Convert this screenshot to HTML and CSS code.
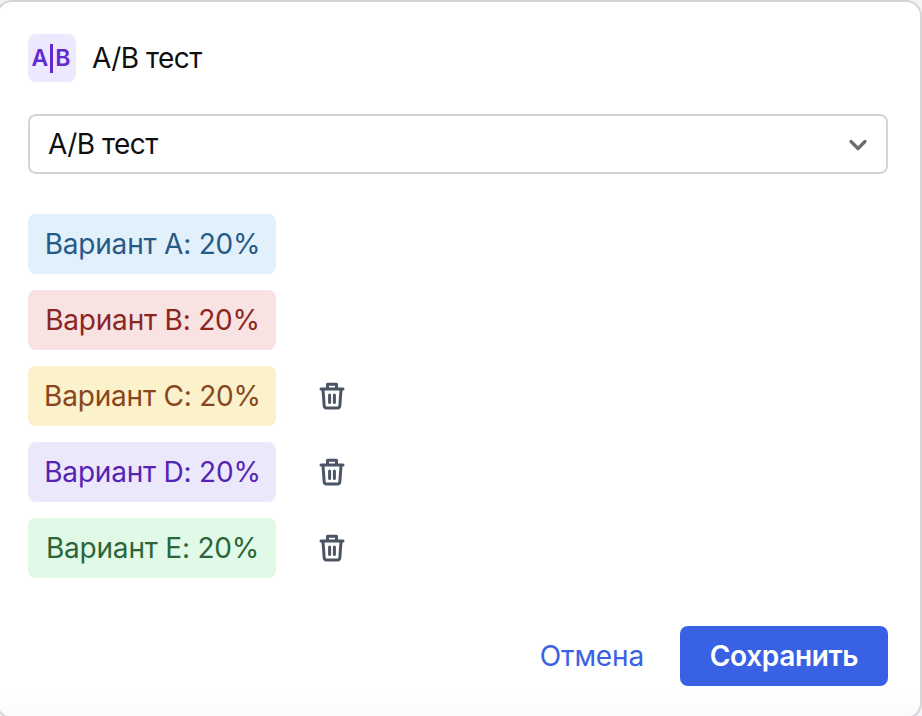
FILE: index.html
```
<!DOCTYPE html>
<html lang="ru">
<head>
  <meta charset="UTF-8">
  <title>A/B тест</title>
  <link rel="stylesheet" href="styles.css">
</head>
<body>
  <svg width="0" height="0" class="sprite">
    <symbol id="trash" viewBox="0 0 28 32">
      <path d="M3 9h22M9.500 8.500V4.200h9v4.300M5 10l1.200 15.900q.2 2.100 2.200 2.100h11.200q2 0 2.200-2.100L23 10M11.600 15v7.500M16.400 15v7.500" fill="none" stroke="currentColor" stroke-width="3" stroke-linecap="round" stroke-linejoin="round"/>
    </symbol>
  </svg>

  <div class="modal">
    <div class="header">
      <div class="logo"><span>A</span><i class="divider"></i><span>B</span></div>
      <div class="title">A/B тест</div>
    </div>

    <div class="select">
      <span class="title">A/B тест</span>
      <svg class="chevron" width="20" height="14" viewBox="0 0 20 14">
        <path d="M3 4.500l7 7 7-7" fill="none" stroke="currentColor" stroke-width="3.200" stroke-linecap="round" stroke-linejoin="round"/>
      </svg>
    </div>

    <div class="variants">
      <div class="row">
        <div class="variant blue">Вариант A: 20%</div>
      </div>
      <div class="row">
        <div class="variant red">Вариант B: 20%</div>
      </div>
      <div class="row">
        <div class="variant yellow">Вариант C: 20%</div>
        <button class="delete" aria-label="Удалить"><svg width="28" height="32"><use href="#trash"/></svg></button>
      </div>
      <div class="row">
        <div class="variant purple">Вариант D: 20%</div>
        <button class="delete" aria-label="Удалить"><svg width="28" height="32"><use href="#trash"/></svg></button>
      </div>
      <div class="row">
        <div class="variant green">Вариант E: 20%</div>
        <button class="delete" aria-label="Удалить"><svg width="28" height="32"><use href="#trash"/></svg></button>
      </div>
    </div>

    <div class="footer">
      <button class="cancel">Отмена</button>
      <button class="save">Сохранить</button>
    </div>
  </div>
</body>
</html>
```
FILE: styles.css
```
* {
  box-sizing: border-box;
}

body {
  margin: 0;
  height: 100vh;
  overflow: hidden;
  background: #f3f3f5;
  font-family: Inter, "Liberation Sans", sans-serif;
  font-size: 28px;
  line-height: 34px;
  color: #0f0f10;
}

.sprite {
  display: none;
}

.modal {
  height: 719px;
  margin-left: -4px;
  padding: 32px 32px 0 30px;
  background: linear-gradient(#fff 690px, #fbfbfb);
  border: 2px solid #d4d4d9;
  border-radius: 16px;
}

.header {
  display: flex;
  align-items: center;
  gap: 16px;
}

.logo {
  display: flex;
  align-items: center;
  justify-content: center;
  gap: 2px;
  width: 48px;
  height: 48px;
  padding-right: 2px;
  border-radius: 8px;
  background: #ece8fd;
  color: #6529d2;
  font-size: 23px;
  font-weight: 600;
}

.divider {
  width: 3px;
  height: 29px;
  background: #6529d2;
}

.title {
  letter-spacing: -0.55px;
}

.select {
  display: flex;
  align-items: center;
  justify-content: space-between;
  height: 60px;
  margin-top: 32px;
  padding: 0 18px;
  border: 2px solid #d2d5db;
  border-radius: 8px;
}

.chevron {
  color: #6b6b6b;
}

.variants {
  display: flex;
  flex-direction: column;
  gap: 16px;
  margin-top: 40px;
}

.row {
  display: flex;
  align-items: center;
  gap: 42px;
}

.variant {
  width: 248px;
  height: 60px;
  padding-left: 1px;
  border-radius: 8px;
  line-height: 60px;
  letter-spacing: -0.2px;
  text-align: center;
  white-space: nowrap;
}

.blue {
  background: #e2f0fc;
  color: #265a88;
}

.red {
  background: #f8e2e2;
  color: #8c2522;
}

.yellow {
  background: #fbf1cb;
  color: #89461c;
}

.purple {
  background: #ece8fc;
  color: #5424b2;
}

.green {
  background: #e1fae8;
  color: #2c6539;
}

button {
  padding: 0;
  border: none;
  background: none;
  font: inherit;
  cursor: pointer;
}

.delete {
  display: flex;
  color: #4c5565;
}

.footer {
  display: flex;
  justify-content: flex-end;
  gap: 36px;
  margin-top: 48px;
}

.cancel {
  color: #3862e3;
  letter-spacing: -0.15px;
}

.save {
  width: 208px;
  height: 60px;
  border-radius: 8px;
  background: #3862e3;
  color: #fff;
  font-weight: 600;
  letter-spacing: -0.35px;
}
```
